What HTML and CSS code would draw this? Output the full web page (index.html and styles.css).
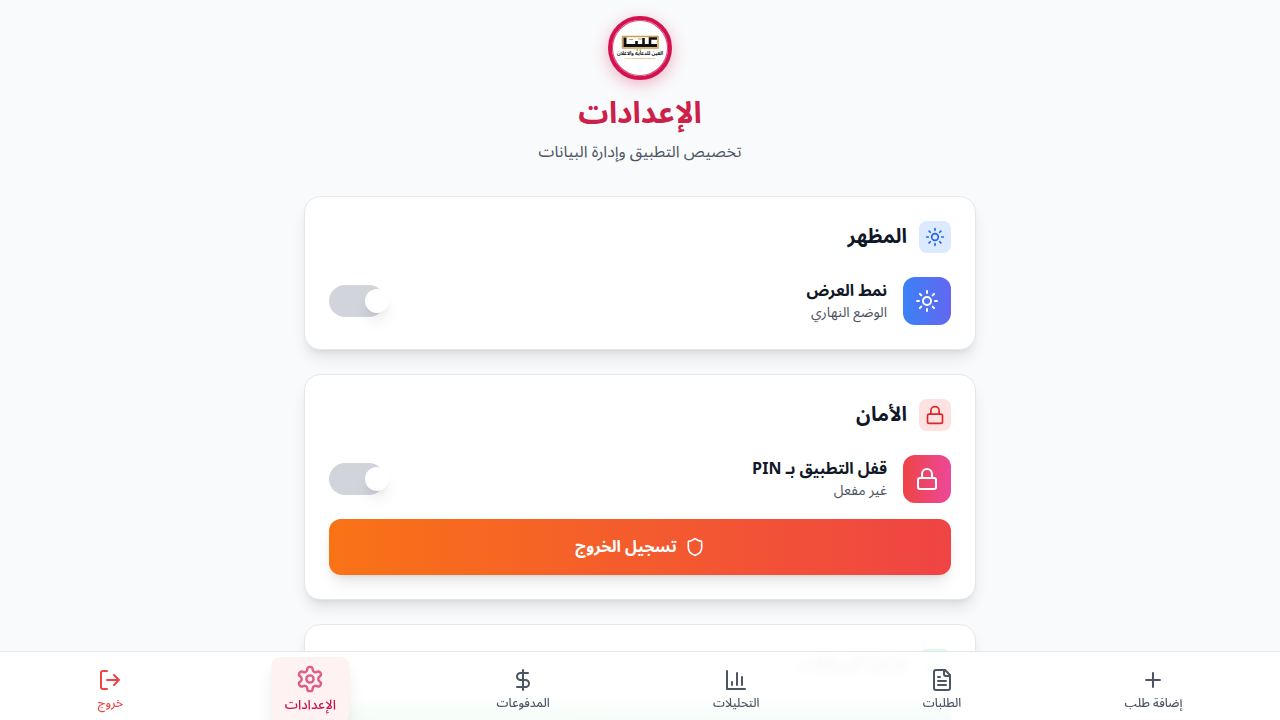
FILE: index.html
```html
<!DOCTYPE html>
<html lang="ar" dir="rtl">
<head>
<meta charset="utf-8">
<meta name="viewport" content="width=device-width, initial-scale=1">
<title>الإعدادات</title>
<link rel="stylesheet" href="styles.css">
</head>
<body>
<svg class="sprite" aria-hidden="true">
  <symbol id="sun" viewBox="0 0 24 24"><circle cx="12" cy="12" r="4"/><path d="M12 2v2M12 20v2M4.93 4.93l1.41 1.41M17.66 17.66l1.41 1.41M2 12h2M20 12h2M6.34 17.66l-1.41 1.41M19.07 4.93l-1.41 1.41"/></symbol>
  <symbol id="lock" viewBox="0 0 24 24"><rect x="3" y="11" width="18" height="11" rx="2"/><path d="M7 11V7a5 5 0 0 1 10 0v4"/></symbol>
</svg>
<main class="page">
  <header class="header">
    <div class="logo">
      <svg viewBox="0 0 56 56" role="img" aria-label="العين للدعاية والاعلان">
        <rect x="10.500" y="16.500" width="35.500" height="11.500" fill="none" stroke="#c9a050" stroke-width="1.500"/>
        <path d="M13 17.500v8h32" fill="none" stroke="#111" stroke-width="3"/>
        <path d="M24.500 21v4M31.500 18v7M45 18.500h-7v7" fill="none" stroke="#111" stroke-width="2.600"/>
        <path d="M17 19.500h4M26 19h4" stroke="#c9a050" stroke-width="1"/>
        <path d="M24.500 30h1.500M27.500 30h1.500" stroke="#c9a050" stroke-width="1.500"/>
        <text class="logo-name" x="28" y="34.500" text-anchor="middle">العين للدعايه والاعلان</text>
        <text class="logo-sub" x="28" y="38.500" text-anchor="middle">Al Ain Advertisement Publicity</text>
      </svg>
    </div>
    <h1 class="title">الإعدادات</h1>
    <p class="subtitle">تخصيص التطبيق وإدارة البيانات</p>
  </header>

  <section class="card">
    <div class="card-head">
      <span class="chip chip-blue"><svg class="icon icon-small"><use href="#sun"/></svg></span>
      <h2>المظهر</h2>
    </div>
    <div class="row">
      <span class="tile tile-blue"><svg class="icon"><use href="#sun"/></svg></span>
      <div class="row-text"><h3 id="mode">نمط العرض</h3><p>الوضع النهاري</p></div>
      <input class="toggle" type="checkbox" role="switch" aria-labelledby="mode">
    </div>
  </section>

  <section class="card">
    <div class="card-head">
      <span class="chip chip-red"><svg class="icon icon-small"><use href="#lock"/></svg></span>
      <h2>الأمان</h2>
    </div>
    <div class="row">
      <span class="tile tile-red"><svg class="icon"><use href="#lock"/></svg></span>
      <div class="row-text"><h3 id="pin">قفل التطبيق بـ PIN</h3><p>غير مفعل</p></div>
      <input class="toggle" type="checkbox" role="switch" aria-labelledby="pin">
    </div>
    <button class="action action-logout" type="button">
      <svg class="icon icon-small" viewBox="0 0 24 24"><path d="M20 13c0 5-3.500 7.500-7.660 8.950a1 1 0 0 1-.67-.01C7.500 20.500 4 18 4 13V6a1 1 0 0 1 1-1c2 0 4.500-1.200 6.240-2.720a1.170 1.170 0 0 1 1.520 0C14.510 3.810 17 5 19 5a1 1 0 0 1 1 1z"/></svg>
      تسجيل الخروج
    </button>
  </section>

  <section class="card">
    <div class="card-head">
      <span class="chip chip-green"><svg class="icon icon-small" viewBox="0 0 24 24"><path d="M21 15v4a2 2 0 0 1-2 2H5a2 2 0 0 1-2-2v-4M7 10l5 5 5-5M12 15V3"/></svg></span>
      <h2>إدارة البيانات</h2>
    </div>
    <button class="action action-export" type="button" aria-label="تصدير البيانات"></button>
  </section>
</main>

<nav class="nav">
  <a class="nav-item" href="#add"><svg class="icon" viewBox="0 0 24 24"><path d="M5 12h14M12 5v14"/></svg><span>إضافة طلب</span></a>
  <a class="nav-item" href="#orders"><svg class="icon" viewBox="0 0 24 24"><path d="M15 2H6a2 2 0 0 0-2 2v16a2 2 0 0 0 2 2h12a2 2 0 0 0 2-2V7zM14 2v4a2 2 0 0 0 2 2h4M10 9H8M16 13H8M16 17H8"/></svg><span>الطلبات</span></a>
  <a class="nav-item" href="#stats"><svg class="icon" viewBox="0 0 24 24"><path d="M3 3v18h18M18 17V9M13 17V5M8 17v-3"/></svg><span>التحليلات</span></a>
  <a class="nav-item" href="#payments"><svg class="icon" viewBox="0 0 24 24"><path d="M12 2v20M17 5H9.500a3.500 3.500 0 0 0 0 7h5a3.500 3.500 0 0 1 0 7H6"/></svg><span>المدفوعات</span></a>
  <a class="nav-item active" href="#settings" aria-current="page"><svg class="icon" viewBox="0 0 24 24"><path d="M12.220 2h-.44a2 2 0 0 0-2 2v.18a2 2 0 0 1-1 1.730l-.43.25a2 2 0 0 1-2 0l-.15-.08a2 2 0 0 0-2.730.730l-.22.38a2 2 0 0 0 .73 2.730l.15.1a2 2 0 0 1 1 1.720v.51a2 2 0 0 1-1 1.740l-.15.09a2 2 0 0 0-.73 2.730l.22.38a2 2 0 0 0 2.730.73l.15-.08a2 2 0 0 1 2 0l.43.25a2 2 0 0 1 1 1.730V20a2 2 0 0 0 2 2h.44a2 2 0 0 0 2-2v-.18a2 2 0 0 1 1-1.730l.43-.25a2 2 0 0 1 2 0l.15.08a2 2 0 0 0 2.730-.73l.22-.39a2 2 0 0 0-.73-2.730l-.15-.08a2 2 0 0 1-1-1.740v-.5a2 2 0 0 1 1-1.740l.15-.09a2 2 0 0 0 .73-2.730l-.22-.38a2 2 0 0 0-2.730-.73l-.15.08a2 2 0 0 1-2 0l-.43-.25a2 2 0 0 1-1-1.730V4a2 2 0 0 0-2-2z"/><circle cx="12" cy="12" r="3"/></svg><span>الإعدادات</span></a>
  <a class="nav-item exit" href="#logout"><svg class="icon" viewBox="0 0 24 24"><path d="M9 21H5a2 2 0 0 1-2-2V5a2 2 0 0 1 2-2h4M16 17l5-5-5-5M21 12H9"/></svg><span>خروج</span></a>
</nav>
</body>
</html>
```
FILE: styles.css
```css
* { box-sizing: border-box; }
body {
  margin: 0;
  background: #f9fafb;
  color: #111827;
  font: 16px/24px "Noto Sans Arabic", "Noto Sans", sans-serif;
}
h1, h2, h3, p { margin: 0; }
.sprite { display: none; }
.icon {
  display: block;
  width: 24px;
  height: 24px;
  flex: none;
  fill: none;
  stroke: currentColor;
  stroke-width: 2;
  stroke-linecap: round;
  stroke-linejoin: round;
}
.icon-small { width: 20px; height: 20px; }

.page {
  display: flex;
  flex-direction: column;
  gap: 24px;
  max-width: 704px;
  margin: 0 auto;
  padding: 16px 16px 96px;
}
.header {
  display: flex;
  flex-direction: column;
  align-items: center;
  padding-bottom: 8px;
  text-align: center;
}
.logo {
  width: 64px;
  height: 64px;
  margin-bottom: 16px;
  border: 4px solid #d31250;
  border-radius: 50%;
  background: #fff;
  box-shadow: 0 4px 16px rgba(211, 18, 80, .3), inset 0 0 0 1px #e4487a;
  overflow: hidden;
}
.logo svg { display: block; width: 100%; height: 100%; }
.logo-name { font: 700 5px "Noto Sans Arabic", sans-serif; fill: #111; }
.logo-sub { font: 700 2px "Noto Sans", sans-serif; fill: #c9a050; }
.title {
  margin-bottom: 8px;
  font-size: 30px;
  line-height: 36px;
  font-weight: 700;
  color: #cb2049;
}
.subtitle { color: #4b5563; }

.card {
  padding: 24px;
  border: 1px solid #e5e7eb;
  border-radius: 16px;
  background: #fff;
  box-shadow: 0 10px 15px -3px rgba(0, 0, 0, .1), 0 4px 6px -4px rgba(0, 0, 0, .1);
}
.card-head {
  display: flex;
  align-items: center;
  gap: 12px;
  margin-bottom: 24px;
}
.card-head h2 { font-size: 20px; line-height: 28px; font-weight: 700; }
.chip, .tile { display: flex; align-items: center; justify-content: center; flex: none; }
.chip { width: 32px; height: 32px; border-radius: 8px; }
.chip-blue { background: #dbeafe; color: #2563eb; }
.chip-red { background: #fee2e2; color: #dc2626; }
.chip-green { background: #dcfce7; color: #16a34a; }
.row { display: flex; align-items: center; gap: 16px; }
.tile { width: 48px; height: 48px; border-radius: 12px; color: #fff; }
.tile-blue { background: linear-gradient(to right, #3b82f6, #6366f1); }
.tile-red { background: linear-gradient(to right, #ef4444, #ec4899); }
.row-text { flex: 1; }
.row-text h3 { font-size: 16px; line-height: 24px; font-weight: 700; }
.row-text p { font-size: 14px; line-height: 20px; color: #4b5563; }
.toggle {
  appearance: none;
  display: flex;
  align-items: center;
  width: 56px;
  height: 32px;
  margin: 0;
  border-radius: 16px;
  background: #d1d5db;
}
.toggle::before {
  content: "";
  width: 24px;
  height: 24px;
  flex: none;
  margin-inline-start: -4px;
  border-radius: 50%;
  background: #fff;
  box-shadow: 0 10px 15px -3px rgba(0, 0, 0, .1), 0 4px 6px -4px rgba(0, 0, 0, .1);
}
.action {
  display: flex;
  align-items: center;
  justify-content: center;
  gap: 8px;
  width: 100%;
  min-height: 56px;
  padding: 16px;
  border: 0;
  border-radius: 12px;
  color: #fff;
  font: inherit;
  font-weight: 700;
  box-shadow: 0 10px 15px -3px rgba(0, 0, 0, .1), 0 4px 6px -4px rgba(0, 0, 0, .1);
}
.action-logout { margin-top: 16px; background: linear-gradient(to right, #f97316, #ef4444); }
.action-export { background: linear-gradient(to right, #22c55e, #10b981); }

.nav {
  position: fixed;
  right: 0;
  bottom: 0;
  left: 0;
  display: flex;
  justify-content: space-around;
  padding: 8px 16px 0;
  border-top: 1px solid #e5e7eb;
  background: rgba(255, 255, 255, .96);
  backdrop-filter: blur(6px);
}
.nav-item {
  display: flex;
  flex-direction: column;
  align-items: center;
  gap: 4px;
  padding: 8px 12px;
  border-radius: 8px;
  color: #4b5563;
  font-size: 12px;
  line-height: 16px;
  font-weight: 500;
  text-decoration: none;
}
.active {
  background: #fef2f2;
  color: #cc0e50;
  box-shadow: 0 10px 15px -3px rgba(0, 0, 0, .1), 0 4px 6px -4px rgba(0, 0, 0, .1);
  transform: scale(1.1);
}
.active .icon { opacity: .65; transform: scale(1.1); }
.exit { color: #ef4444; }
```
